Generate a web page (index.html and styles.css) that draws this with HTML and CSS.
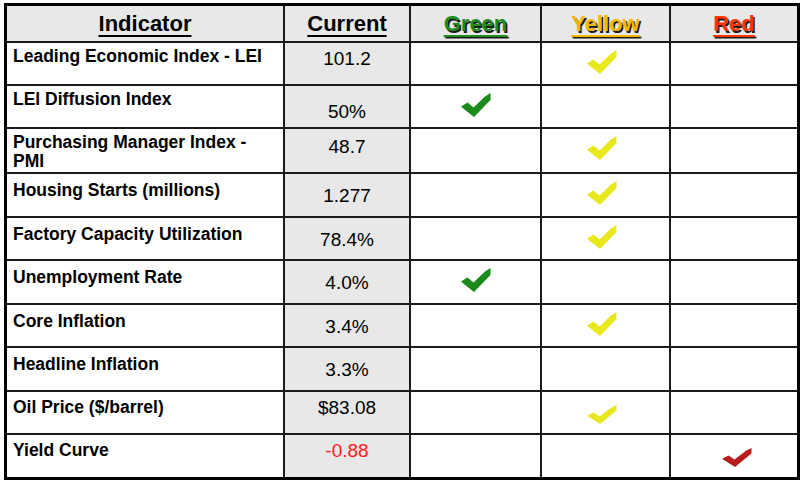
FILE: index.html
```
<!DOCTYPE html>
<html>
<head>
<meta charset="utf-8">
<link rel="stylesheet" href="styles.css">
</head>
<body>
<div class="table">
  <div class="hd"><span class="ul">Indicator</span></div>
  <div class="hd"><span class="ul">Current</span></div>
  <div class="hd"><span class="ul c-green">Green</span></div>
  <div class="hd"><span class="ul c-yellow">Yellow</span></div>
  <div class="hd"><span class="ul c-red">Red</span></div>

  <div class="lbl">Leading Economic Index - LEI</div>
  <div class="val">101.2</div>
  <div class="cell"></div>
  <div class="cell chk y"><svg viewBox="0 0 30 24" width="30" height="24"><path d="M0,13.5 L6.5,9.5 L12.5,14.5 L24,3.5 L29.5,0 L29.5,7 L13,24 L3.5,16.5 Z"/></svg></div>
  <div class="cell"></div>

  <div class="lbl">LEI Diffusion Index</div>
  <div class="val low">50%</div>
  <div class="cell chk g"><svg viewBox="0 0 30 24" width="30" height="24"><path d="M0,13.5 L6.5,9.5 L12.5,14.5 L24,3.5 L29.5,0 L29.5,7 L13,24 L3.5,16.5 Z"/></svg></div>
  <div class="cell"></div>
  <div class="cell"></div>

  <div class="lbl">Purchasing Manager Index -<br>PMI</div>
  <div class="val mid">48.7</div>
  <div class="cell"></div>
  <div class="cell chk y"><svg viewBox="0 0 30 24" width="30" height="24"><path d="M0,13.5 L6.5,9.5 L12.5,14.5 L24,3.5 L29.5,0 L29.5,7 L13,24 L3.5,16.5 Z"/></svg></div>
  <div class="cell"></div>

  <div class="lbl dn">Housing Starts (millions)</div>
  <div class="val dn">1.277</div>
  <div class="cell"></div>
  <div class="cell chk y"><svg viewBox="0 0 30 24" width="30" height="24"><path d="M0,13.5 L6.5,9.5 L12.5,14.5 L24,3.5 L29.5,0 L29.5,7 L13,24 L3.5,16.5 Z"/></svg></div>
  <div class="cell"></div>

  <div class="lbl dn">Factory Capacity Utilization</div>
  <div class="val dn">78.4%</div>
  <div class="cell"></div>
  <div class="cell chk y"><svg viewBox="0 0 30 24" width="30" height="24"><path d="M0,13.5 L6.5,9.5 L12.5,14.5 L24,3.5 L29.5,0 L29.5,7 L13,24 L3.5,16.5 Z"/></svg></div>
  <div class="cell"></div>

  <div class="lbl dn">Unemployment Rate</div>
  <div class="val dn">4.0%</div>
  <div class="cell chk g"><svg viewBox="0 0 30 24" width="30" height="24"><path d="M0,13.5 L6.5,9.5 L12.5,14.5 L24,3.5 L29.5,0 L29.5,7 L13,24 L3.5,16.5 Z"/></svg></div>
  <div class="cell"></div>
  <div class="cell"></div>

  <div class="lbl dn">Core Inflation</div>
  <div class="val dn">3.4%</div>
  <div class="cell"></div>
  <div class="cell chk y"><svg viewBox="0 0 30 24" width="30" height="24"><path d="M0,13.5 L6.5,9.5 L12.5,14.5 L24,3.5 L29.5,0 L29.5,7 L13,24 L3.5,16.5 Z"/></svg></div>
  <div class="cell"></div>

  <div class="lbl dn">Headline Inflation</div>
  <div class="val dn">3.3%</div>
  <div class="cell"></div>
  <div class="cell"></div>
  <div class="cell"></div>

  <div class="lbl sl">Oil Price ($/barrel)</div>
  <div class="val">$83.08</div>
  <div class="cell"></div>
  <div class="cell chk y flat"><svg viewBox="0 0 30 24" width="30" height="19" preserveAspectRatio="none"><path d="M0,13.5 L6.5,9.5 L12.5,14.5 L24,3.5 L29.5,0 L29.5,7 L13,24 L3.5,16.5 Z"/></svg></div>
  <div class="cell"></div>

  <div class="lbl sl">Yield Curve</div>
  <div class="val neg">-0.88</div>
  <div class="cell"></div>
  <div class="cell"></div>
  <div class="cell chk r flat"><svg viewBox="0 0 30 24" width="30" height="19" preserveAspectRatio="none"><path d="M0,13.5 L6.5,9.5 L12.5,14.5 L24,3.5 L29.5,0 L29.5,7 L13,24 L3.5,16.5 Z"/></svg></div>
</div>
</body>
</html>
```
FILE: styles.css
```
html, body {
  margin: 0;
  padding: 0;
  background: #ffffff;
}
body {
  font-family: "Liberation Sans", Arial, sans-serif;
  color: #000;
}
.table {
  display: grid;
  grid-template-columns: 276px 124px 129px 127px 126px;
  grid-template-rows: 35px 41px 41px 43px 42px 41px 42px 41px 42px 41px 42px;
  gap: 2px;
  background: #1a1a1a;
  border: 3px solid #000;
  width: max-content;
  margin: 3px 0 0 4px;
}
.hd {
  background: #e8e8e8;
  display: flex;
  align-items: center;
  justify-content: center;
  font-size: 22px;
  font-weight: bold;
}
.ul {
  text-decoration: underline;
  text-decoration-thickness: 2px;
  text-underline-offset: 4px;
}
.c-green { color: #1e8c1e; text-shadow: 1.5px 1.5px 0 #1a1a1a; }
.c-yellow { color: #f5b800; text-shadow: 1.5px 1.5px 0 #1a1a1a; }
.c-red { color: #ff3300; text-shadow: 1.5px 1.5px 0 #1a1a1a; }
.lbl {
  background: #fff;
  font-size: 17.5px;
  line-height: 19px;
  font-weight: bold;
  padding: 4px 0 0 6px;
}
.lbl.dn { padding-top: 7px; }
.lbl.sl { padding-top: 6px; }
.val {
  background: #e8e8e8;
  font-size: 19px;
  line-height: 22px;
  text-align: center;
  padding-top: 5px;
}
.val.low { padding-top: 15px; }
.val.mid { padding-top: 7px; }
.val.dn { padding-top: 11px; }
.val.neg { color: #ff1a1a; }
.cell {
  background: #fff;
}
.chk {
  display: flex;
  justify-content: center;
  align-items: flex-start;
  padding-top: 7px;
}
.chk.flat { padding-top: 13px; }
.chk.y { padding-right: 8px; }
.chk.g path { fill: #1a8a1a; }
.chk.y path { fill: #e8e81c; }
.chk.r path { fill: #b81c1c; }
.chk.r { padding-left: 6px; }
```
